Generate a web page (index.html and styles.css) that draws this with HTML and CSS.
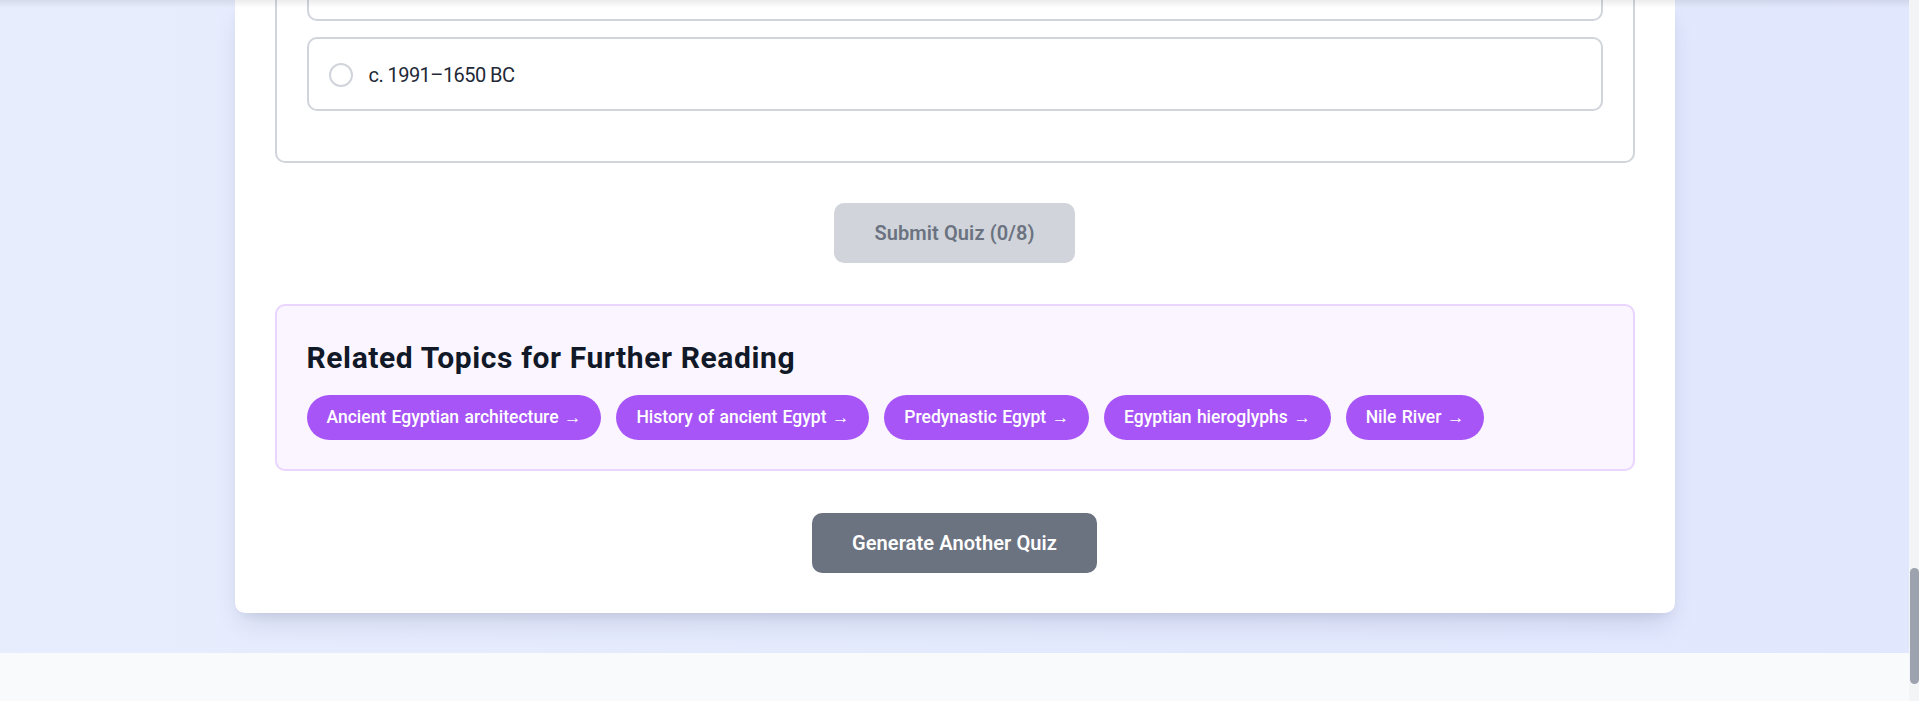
FILE: index.html
```
<!DOCTYPE html>
<html lang="en">
<head>
<meta charset="utf-8">
<title>Quiz</title>
<link rel="stylesheet" href="styles.css">
</head>
<body>
<div class="main">
  <div class="topshade"></div>
  <section class="hero">
    <div class="card">
      <div class="question">
        <div class="options">
          <div class="option option-cut"></div>
          <label class="option">
            <span class="radio"></span>
            <span class="option-text">c. 1991–1650 BC</span>
          </label>
        </div>
      </div>

      <div class="actions">
        <button class="btn btn-disabled" type="button">Submit Quiz (0/8)</button>
      </div>

      <div class="related">
        <h3 class="related-title">Related Topics for Further Reading</h3>
        <div class="pills">
          <a class="pill">Ancient Egyptian architecture →</a>
          <a class="pill">History of ancient Egypt →</a>
          <a class="pill">Predynastic Egypt →</a>
          <a class="pill">Egyptian hieroglyphs →</a>
          <a class="pill">Nile River →</a>
        </div>
      </div>

      <div class="actions actions-last">
        <button class="btn btn-gray" type="button">Generate Another Quiz</button>
      </div>
    </div>
  </section>
  <footer class="footer"></footer>
</div>
<div class="scrollbar"><div class="thumb"></div></div>
</body>
</html>
```
FILE: styles.css
```
* { box-sizing: border-box; }

html, body {
  margin: 0;
  height: 100%;
  overflow: hidden;
}

body {
  display: flex;
  font-family: Roboto, "Noto Sans", sans-serif;
  color: #1f2937;
  background: #f9fafb;
}

.main {
  flex: 1;
  position: relative;
  display: flex;
  flex-direction: column;
}

.topshade {
  position: absolute;
  top: 0;
  left: 0;
  right: 0;
  height: 8px;
  background: linear-gradient(rgba(0, 0, 0, 0.075), rgba(0, 0, 0, 0));
  z-index: 5;
}

.hero {
  background: linear-gradient(to right, #e7edfd, #e1e7fd);
  padding: 0 0 40px;
}

.card {
  width: 1440px;
  margin: 0 auto;
  background: #ffffff;
  border-radius: 0 0 10px 10px;
  padding: 0 40px 40px;
  box-shadow: 0 14px 28px -8px rgba(30, 40, 90, 0.16), 0 6px 12px -6px rgba(30, 40, 90, 0.10);
}

.question {
  border: 2px solid #d1d5db;
  border-top: none;
  border-radius: 0 0 10px 10px;
  padding: 0 30px 50px;
}

.options {
  display: flex;
  flex-direction: column;
  gap: 16px;
}

.option {
  display: flex;
  align-items: center;
  border: 2px solid #d1d5db;
  border-radius: 10px;
  padding: 21px 20px 19px;
  line-height: 30px;
  cursor: pointer;
}

.option-cut {
  height: 21px;
  padding: 0;
  border-top: none;
  border-radius: 0 0 10px 10px;
}

.radio {
  width: 24px;
  height: 24px;
  border: 2px solid #d1d5db;
  border-radius: 50%;
  background: #fff;
  margin-right: 16px;
  flex: none;
}

.option-text {
  font-size: 20px;
  letter-spacing: -0.55px;
  color: #1f2937;
}

.actions {
  display: flex;
  justify-content: center;
  margin-top: 40px;
}

.actions-last {
  margin-top: 42px;
}

.btn {
  border: none;
  border-radius: 10px;
  padding: 15px 40px;
  font-family: Roboto, "Noto Sans", sans-serif;
  font-size: 20px;
  font-weight: 600;
  line-height: 30px;
  letter-spacing: 0.1px;
}

.btn-disabled {
  background: #d1d5db;
  color: #6b7280;
}

.btn-gray {
  background: #6b7280;
  color: #ffffff;
}

.related {
  margin-top: 41px;
  background: #faf5ff;
  border: 2px solid #e9d5ff;
  border-radius: 10px;
  padding: 33px 30px 29px;
}

.related-title {
  margin: 0 0 18px;
  font-size: 30px;
  line-height: 38px;
  font-weight: 700;
  color: #111827;
  letter-spacing: 0.6px;
}

.pills {
  display: flex;
  flex-wrap: wrap;
  gap: 15px;
}

.pill {
  background: #a855f7;
  color: #ffffff;
  border-radius: 999px;
  padding: 10px 20px;
  font-size: 17.5px;
  line-height: 25px;
  font-weight: 500;
  word-spacing: 1px;
  white-space: nowrap;
  cursor: pointer;
}

.footer {
  flex: 1;
  background: #f9fafb;
}

.scrollbar {
  width: 10px;
  flex: none;
  background: #f3f4f6;
  padding-top: 568px;
}

.thumb {
  width: 9px;
  margin-left: 1px;
  height: 116px;
  border-radius: 5px;
  background: #9ca3af;
}
```
